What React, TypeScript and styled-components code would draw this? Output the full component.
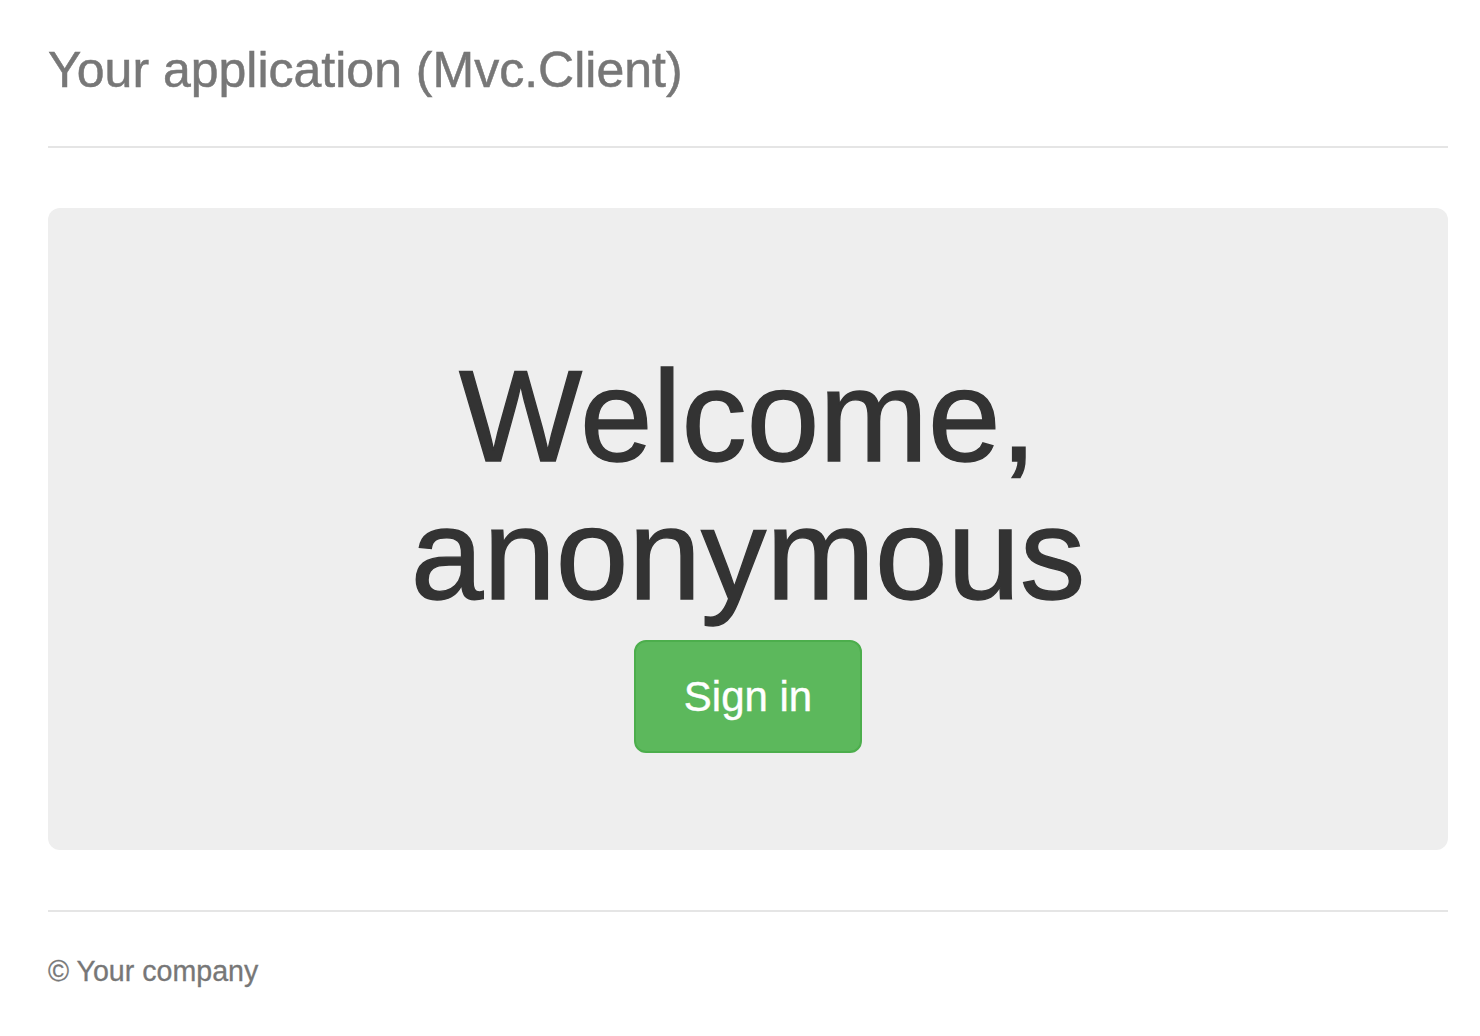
import React from "react";
import styled, { createGlobalStyle } from "styled-components";

const GlobalStyle = createGlobalStyle`
  html, body {
    margin: 0;
    padding: 0;
    background: #ffffff;
  }
  body {
    font-family: "Liberation Sans", Arial, Helvetica, sans-serif;
    color: #333333;
  }
`;

const Container = styled.div`
  padding: 0 32px 0 48px;
  width: 1400px;
`;

const Header = styled.header`
  padding: 42px 0 48px;
  border-bottom: 2px solid #e5e5e5;
`;

const Title = styled.h3`
  margin: 0;
  font-size: 50px;
  line-height: 56px;
  font-weight: normal;
  color: #777777;
  -webkit-text-stroke: 0.5px #777777;
`;

const Jumbotron = styled.section`
  margin-top: 60px;
  background: #eeeeee;
  border-radius: 12px;
  padding: 139px 0 97px;
  display: flex;
  flex-direction: column;
  align-items: center;
  text-align: center;
`;

const Heading = styled.h1`
  margin: 0 0 17px;
  font-size: 130.5px;
  line-height: 138px;
  font-weight: normal;
  color: #333333;
  -webkit-text-stroke: 1.4px #333333;
`;

const Button = styled.a`
  box-sizing: border-box;
  display: flex;
  align-items: center;
  justify-content: center;
  width: 228px;
  height: 113px;
  background: #5cb85c;
  border: 2px solid #4cae4c;
  border-radius: 12px;
  color: #ffffff;
  font-size: 42px;
  text-decoration: none;
  cursor: pointer;
  -webkit-text-stroke: 0.4px #ffffff;
`;

const Footer = styled.footer`
  margin-top: 60px;
  border-top: 2px solid #e5e5e5;
  padding-top: 39px;
`;

const FooterText = styled.p`
  margin: 0;
  font-size: 28.6px;
  line-height: 40px;
  color: #777777;
  -webkit-text-stroke: 0.3px #777777;
`;

export default function App() {
  return (
    <>
      <GlobalStyle />
      <Container>
        <Header>
          <Title>Your application (Mvc.Client)</Title>
        </Header>
        <Jumbotron>
          <Heading>
            Welcome,
            <br />
            anonymous
          </Heading>
          <Button>Sign in</Button>
        </Jumbotron>
        <Footer>
          <FooterText>© Your company</FooterText>
        </Footer>
      </Container>
    </>
  );
}
